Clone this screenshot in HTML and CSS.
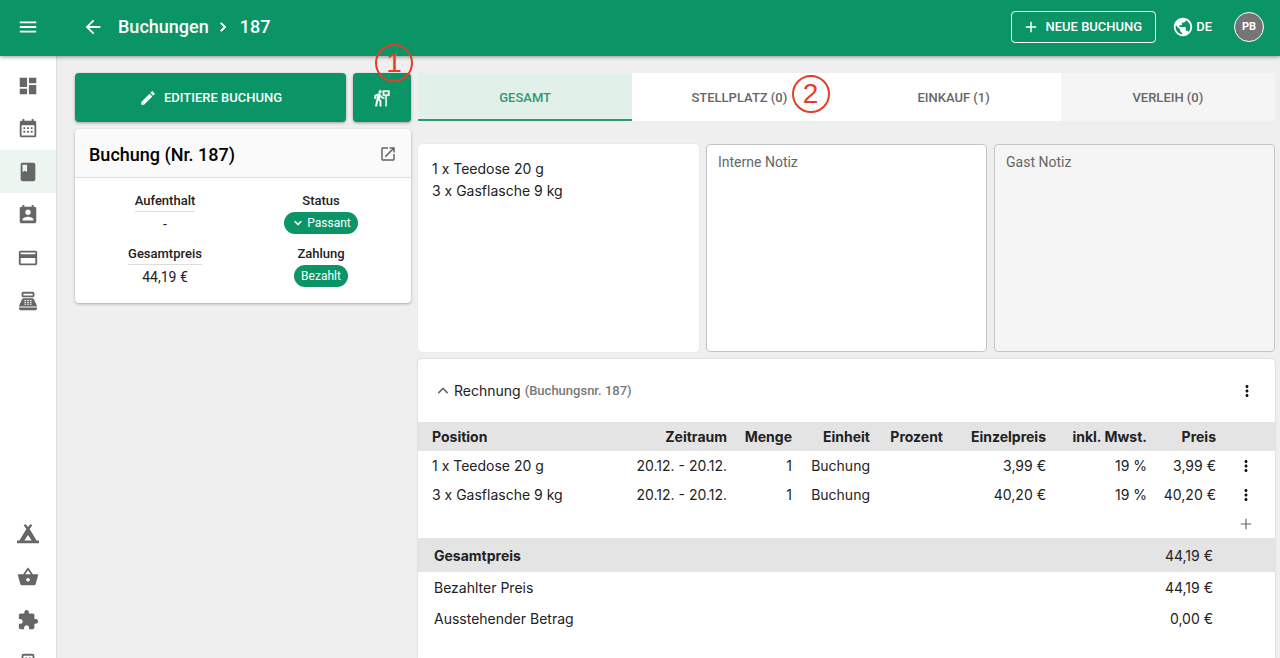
FILE: index.html
```html
<!DOCTYPE html>
<html lang="de">
  <head>
    <meta charset="UTF-8" />
    <meta name="viewport" content="width=device-width, initial-scale=1.0" />
    <title>Buchung 187</title>

    <link rel="stylesheet" href="styles.css">
  </head>

  <body>
    <header class="topbar">
      <button class="icon-button menu" aria-label="Menü">
        <svg class="icon" viewBox="0 0 24 24"><path d="M3 18h18v-2H3v2zm0-5h18v-2H3v2zm0-7v2h18V6H3z" /></svg>
      </button>
      <nav class="breadcrumb">
        <a href="#" aria-label="Zurück">
          <svg class="icon" viewBox="0 0 24 24"><path d="M20 11H7.83l5.59-5.59L12 4l-8 8 8 8 1.41-1.41L7.83 13H20v-2z" /></svg>
        </a>
        <a class="crumb" href="#">Buchungen</a>
        <svg class="icon small chevron" viewBox="0 0 24 24"><path d="M10 6L8.59 7.41 13.17 12l-4.58 4.59L10 18l6-6z" stroke="currentColor" /></svg>
        <span>187</span>
      </nav>
      <div class="topbar-actions">
        <button class="new-booking">
          <svg class="icon small" viewBox="0 0 24 24"><path d="M19 13h-6v6h-2v-6H5v-2h6V5h2v6h6v2z" /></svg>
          NEUE BUCHUNG
        </button>
        <button class="language">
          <svg class="icon" viewBox="0 0 24 24"><path d="M12 2C6.48 2 2 6.48 2 12s4.48 10 10 10 10-4.48 10-10S17.52 2 12 2zm-1 17.93c-3.95-.49-7-3.85-7-7.93 0-.62.08-1.21.21-1.79L9 15v1c0 1.1.9 2 2 2v1.93zm6.9-2.54c-.26-.81-1-1.39-1.9-1.39h-1v-3c0-.55-.45-1-1-1H8v-2h2c.55 0 1-.45 1-1V7h2c1.1 0 2-.9 2-2v-.41c2.93 1.19 5 4.06 5 7.41 0 2.08-.8 3.97-2.1 5.39z" /></svg>
          DE
        </button>
        <button class="avatar">PB</button>
      </div>
    </header>

    <div class="layout">
      <nav class="sidebar">
        <div class="sidebar-group">
          <a href="#" aria-label="Dashboard">
            <svg class="icon" viewBox="0 0 24 24"><path d="M3 13h8V3H3v10zm0 8h8v-6H3v6zm10 0h8V11h-8v10zm0-18v6h8V3h-8z" /></svg>
          </a>
          <a href="#" aria-label="Kalender">
            <svg class="icon" viewBox="0 0 24 24"><path d="M9 10v2H7v-2h2m4 0v2h-2v-2h2m4 0v2h-2v-2h2m2-7a2 2 0 0 1 2 2v14a2 2 0 0 1-2 2H5c-1.11 0-2-.9-2-2V5a2 2 0 0 1 2-2h1V1h2v2h8V1h2v2h1m0 16V8H5v11h14M9 14v2H7v-2h2m4 0v2h-2v-2h2m4 0v2h-2v-2h2z" /></svg>
          </a>
          <a class="active" href="#" aria-label="Buchungen">
            <svg class="icon" viewBox="0 0 24 24"><path d="M18 2H6c-1.1 0-2 .9-2 2v16c0 1.1.9 2 2 2h12c1.1 0 2-.9 2-2V4c0-1.1-.9-2-2-2zM6 4h5v8l-2.5-1.5L6 12V4z" /></svg>
          </a>
          <a href="#" aria-label="Gäste">
            <svg class="icon" viewBox="0 0 24 24"><path d="M19 3h-1V1h-2v2H8V1H6v2H5c-1.11 0-2 .9-2 2v14c0 1.1.89 2 2 2h14c1.1 0 2-.9 2-2V5c0-1.1-.9-2-2-2zm-7 3c1.66 0 3 1.34 3 3s-1.34 3-3 3-3-1.34-3-3 1.34-3 3-3zm6 12H6v-1c0-2 4-3.1 6-3.1s6 1.1 6 3.1v1z" /></svg>
          </a>
          <a href="#" aria-label="Zahlungen">
            <svg class="icon" viewBox="0 0 24 24"><path d="M20 4H4c-1.11 0-1.99.89-1.99 2L2 18c0 1.11.89 2 2 2h16c1.11 0 2-.89 2-2V6c0-1.11-.89-2-2-2zm0 14H4v-6h16v6zm0-10H4V6h16v2z" /></svg>
          </a>
          <a href="#" aria-label="Kasse">
            <svg class="icon" viewBox="0 0 24 24">
              <path d="M17 2H7c-1.1 0-2 .9-2 2v2c0 1.1.9 2 2 2h10c1.1 0 2-.9 2-2V4c0-1.1-.9-2-2-2zm0 4H7V4h10v2zm3 16H4c-1.1 0-2-.9-2-2v-1h20v1c0 1.1-.9 2-2 2zM18.53 10.19A2 2 0 0 0 16.7 9H7.3c-.79 0-1.51.47-1.83 1.19L2 18h20l-3.47-7.81z" />
              <path class="keys" d="M8 11.5h2M11 11.5h2M14 11.5h2M8 13.5h2M11 13.5h2M14 13.5h2M8 15.5h2M11 15.5h2M14 15.5h2" />
            </svg>
          </a>
        </div>
        <div class="sidebar-group">
          <a href="#" aria-label="Stellplätze">
            <svg class="icon" viewBox="0 0 24 24"><path d="M9.2 1L12 4.4 14.8 1l1.9 1.5-2.9 4L21.4 19H24v3H0v-3h2.6l7.6-12.5-2.9-4zM12 13l-4 6h8z" /></svg>
          </a>
          <a href="#" aria-label="Einkauf">
            <svg class="icon" viewBox="0 0 24 24"><path d="M17.21 9l-4.38-6.56c-.19-.28-.51-.42-.83-.42-.32 0-.64.14-.83.43L6.79 9H2c-.55 0-1 .45-1 1 0 .09.01.18.04.27l2.54 9.27c.23.84 1 1.46 1.92 1.46h13c.92 0 1.69-.62 1.93-1.46l2.54-9.27L23 10c0-.55-.45-1-1-1h-4.79zM9 9l3-4.4L15 9H9zm3 8c-1.1 0-2-.9-2-2s.9-2 2-2 2 .9 2 2-.9 2-2 2z" /></svg>
          </a>
          <a href="#" aria-label="Erweiterungen">
            <svg class="icon" viewBox="0 0 24 24"><path d="M20.5 11H19V7c0-1.1-.9-2-2-2h-4V3.5C13 2.12 11.88 1 10.5 1S8 2.12 8 3.5V5H4c-1.1 0-1.99.9-1.99 2v3.8H3.5c1.49 0 2.7 1.21 2.7 2.7s-1.21 2.7-2.7 2.7H2V20c0 1.1.9 2 2 2h3.8v-1.5c0-1.49 1.21-2.7 2.7-2.7 1.49 0 2.7 1.21 2.7 2.7V22H17c1.1 0 2-.9 2-2v-4h1.5c1.38 0 2.5-1.12 2.5-2.5S21.88 11 20.5 11z" /></svg>
          </a>
          <a href="#" aria-label="Verwaltung">
            <svg class="icon" viewBox="0 0 24 24"><path d="M7 2h10a2 2 0 0 1 2 2v18H5V4a2 2 0 0 1 2-2zm0 2v16h10V4zm2 2h2v3H9zm4 0h2v3h-2z" /></svg>
          </a>
        </div>
      </nav>

      <main class="content">
        <section class="booking">
          <div class="booking-actions">
            <button class="primary edit">
              <svg class="icon small" viewBox="0 0 24 24"><path d="M3 17.25V21h3.75L17.81 9.94l-3.75-3.75L3 17.25zM20.71 7.04c.39-.39.39-1.02 0-1.41l-2.34-2.34c-.39-.39-1.02-.39-1.41 0l-1.83 1.83 3.75 3.75 1.83-1.83z" /></svg>
              EDITIERE BUCHUNG
            </button>
            <button class="primary checkout" aria-label="Abreise">
              <svg class="icon small" viewBox="0 0 24 24"><path d="M9.5 5.5c1.1 0 2-.9 2-2s-.9-2-2-2-2 .9-2 2 .9 2 2 2zM5.75 8.9L3 23h2.1l1.75-8L9 17v6h2v-7.55L8.95 13.4l.6-3C10.85 12 12.8 13 15 13v-2c-1.85 0-3.45-1-4.35-2.45l-.95-1.6C9.35 6.35 8.7 6 8 6c-.25 0-.5.05-.75.15L2 8.3V13h2V9.65l1.75-.75M13 2v7h3.75v14h1.5V9H22V2h-9zm7 5.2h-5V3.8h5v3.4z" stroke="currentColor" stroke-width=".5" /></svg>
              <span class="marker marker-checkout">1</span>
            </button>
          </div>

          <div class="card">
            <div class="card-header">
              <h1>Buchung (Nr. 187)</h1>
              <a href="#" aria-label="Öffnen">
                <svg class="icon small" viewBox="0 0 24 24"><path d="M19 19H5V5h7V3H5c-1.11 0-2 .9-2 2v14c0 1.1.89 2 2 2h14c1.1 0 2-.9 2-2v-7h-2v7zM14 3v2h3.59l-9.83 9.83 1.41 1.41L19 6.41V10h2V3h-7z" /></svg>
              </a>
            </div>
            <dl class="facts">
              <div>
                <dt><span class="underlined">Aufenthalt</span></dt>
                <dd>-</dd>
              </div>
              <div>
                <dt>Status</dt>
                <dd>
                  <button class="chip">
                    <svg class="icon tiny" viewBox="0 0 24 24"><path d="M16.59 8.59L12 13.17 7.41 8.59 6 10l6 6 6-6z" stroke="currentColor" /></svg>
                    Passant
                  </button>
                </dd>
              </div>
              <div>
                <dt><span class="underlined">Gesamtpreis</span></dt>
                <dd>44,19 €</dd>
              </div>
              <div>
                <dt>Zahlung</dt>
                <dd><span class="chip">Bezahlt</span></dd>
              </div>
            </dl>
          </div>
        </section>

        <section class="details">
          <div class="tabs" role="tablist">
            <button class="tab selected" role="tab">GESAMT</button>
            <button class="tab" role="tab">STELLPLATZ (0)<span class="marker marker-pitch">2</span></button>
            <button class="tab" role="tab">EINKAUF (1)</button>
            <button class="tab muted" role="tab">VERLEIH (0)</button>
          </div>

          <div class="notes">
            <div class="summary">
              <div>1 x Teedose 20 g</div>
              <div>3 x Gasflasche 9 kg</div>
            </div>
            <textarea aria-label="Interne Notiz" placeholder="Interne Notiz"></textarea>
            <textarea aria-label="Gast Notiz" placeholder="Gast Notiz" disabled></textarea>
          </div>

          <div class="invoice">
            <div class="invoice-header">
              <button class="icon-button" aria-label="Einklappen">
                <svg class="icon small" viewBox="0 0 24 24"><path d="M12 7l-7 7 1.5 1.5L12 10l5.5 5.5L19 14z" /></svg>
              </button>
              <h2>Rechnung</h2>
              <span class="invoice-number">(Buchungsnr. 187)</span>
              <button class="icon-button more" aria-label="Mehr">
                <svg class="icon small" viewBox="0 0 24 24"><path d="M12 8c1.1 0 2-.9 2-2s-.9-2-2-2-2 .9-2 2 .9 2 2 2zm0 2c-1.1 0-2 .9-2 2s.9 2 2 2 2-.9 2-2-.9-2-2-2zm0 6c-1.1 0-2 .9-2 2s.9 2 2 2 2-.9 2-2-.9-2-2-2z" /></svg>
              </button>
            </div>

            <table class="positions">
              <colgroup>
                <col>
                <col class="col-period">
                <col class="col-amount">
                <col class="col-unit">
                <col class="col-percent">
                <col class="col-single">
                <col class="col-tax">
                <col class="col-price">
                <col class="col-action">
              </colgroup>
              <thead>
                <tr>
                  <th>Position</th>
                  <th>Zeitraum</th>
                  <th>Menge</th>
                  <th>Einheit</th>
                  <th>Prozent</th>
                  <th>Einzelpreis</th>
                  <th>inkl. Mwst.</th>
                  <th>Preis</th>
                  <th></th>
                </tr>
              </thead>
              <tbody>
                <tr>
                  <td>1 x Teedose 20 g</td>
                  <td>20.12. - 20.12.</td>
                  <td>1</td>
                  <td>Buchung</td>
                  <td></td>
                  <td>3,99 €</td>
                  <td>19 %</td>
                  <td>3,99 €</td>
                  <td>
                    <button class="icon-button dark" aria-label="Mehr">
                      <svg class="icon small" viewBox="0 0 24 24"><path d="M12 8c1.1 0 2-.9 2-2s-.9-2-2-2-2 .9-2 2 .9 2 2 2zm0 2c-1.1 0-2 .9-2 2s.9 2 2 2 2-.9 2-2-.9-2-2-2zm0 6c-1.1 0-2 .9-2 2s.9 2 2 2 2-.9 2-2-.9-2-2-2z" /></svg>
                    </button>
                  </td>
                </tr>
                <tr>
                  <td>3 x Gasflasche 9 kg</td>
                  <td>20.12. - 20.12.</td>
                  <td>1</td>
                  <td>Buchung</td>
                  <td></td>
                  <td>40,20 €</td>
                  <td>19 %</td>
                  <td>40,20 €</td>
                  <td>
                    <button class="icon-button dark" aria-label="Mehr">
                      <svg class="icon small" viewBox="0 0 24 24"><path d="M12 8c1.1 0 2-.9 2-2s-.9-2-2-2-2 .9-2 2 .9 2 2 2zm0 2c-1.1 0-2 .9-2 2s.9 2 2 2 2-.9 2-2-.9-2-2-2zm0 6c-1.1 0-2 .9-2 2s.9 2 2 2 2-.9 2-2-.9-2-2-2z" /></svg>
                    </button>
                  </td>
                </tr>
                <tr>
                  <td colspan="8"></td>
                  <td>
                    <button class="icon-button" aria-label="Position hinzufügen">
                      <svg class="icon small" viewBox="0 0 24 24"><path d="M19 12.8h-6.2V19h-1.6v-6.200H5v-1.600h6.200V5h1.600v6.200H19z" /></svg>
                    </button>
                  </td>
                </tr>
              </tbody>
            </table>

            <table class="totals">
              <tbody>
                <tr class="sum">
                  <th>Gesamtpreis</th>
                  <td>44,19 €</td>
                </tr>
                <tr>
                  <th>Bezahlter Preis</th>
                  <td>44,19 €</td>
                </tr>
                <tr>
                  <th>Ausstehender Betrag</th>
                  <td>0,00 €</td>
                </tr>
              </tbody>
            </table>
          </div>
        </section>
      </main>
    </div>
  </body>
</html>
```
FILE: styles.css
```css
* {
  box-sizing: border-box;
}

body {
  margin: 0;
  height: 100vh;
  display: flex;
  flex-direction: column;
  overflow: hidden;
  background-color: #efefef;
  color: #222;
  font-family: Roboto, "Liberation Sans", sans-serif;
  font-size: 14px;
}

button {
  padding: 0;
  border: none;
  background: none;
  color: inherit;
  font: inherit;
  cursor: pointer;
}

a {
  color: inherit;
  text-decoration: none;
}

.icon {
  display: block;
  flex: none;
  width: 22px;
  height: 22px;
  fill: currentColor;
}

.icon.small {
  width: 18px;
  height: 18px;
}

.icon.tiny {
  width: 14px;
  height: 14px;
}

.icon-button {
  display: flex;
  align-items: center;
  justify-content: center;
  color: #666;
}

/* top bar */

.topbar {
  position: relative;
  z-index: 2;
  flex: none;
  height: 56px;
  padding: 0 16px 3px 0;
  display: flex;
  align-items: center;
  background-color: #0b9567;
  box-shadow: 0 1px 4px rgba(0, 0, 0, 0.4);
  color: #fff;
}

.menu {
  width: 56px;
  color: #fff;
}

.breadcrumb {
  margin-left: 26px;
  display: flex;
  align-items: center;
  font-size: 18px;
  font-weight: 500;
}

.crumb {
  margin-left: 14px;
}

.chevron {
  margin: 0 8px 0 5px;
}

.topbar-actions {
  margin-left: auto;
  display: flex;
  align-items: center;
  font-size: 13px;
  font-weight: 500;
}

.new-booking {
  height: 32px;
  padding: 0 13px 0 10px;
  display: flex;
  align-items: center;
  gap: 6px;
  border: 1px solid #fff;
  border-radius: 4px;
}

.language {
  margin: 0 22px 0 16px;
  display: flex;
  align-items: center;
  gap: 2px;
}

.avatar {
  width: 30px;
  height: 30px;
  border: 1px solid #fff;
  border-radius: 50%;
  background-color: #757575;
  font-size: 11px;
  font-weight: 700;
}

/* sidebar */

.layout {
  flex: 1;
  min-height: 0;
  display: flex;
}

.sidebar {
  flex: none;
  width: 57px;
  padding-top: 8px;
  display: flex;
  flex-direction: column;
  gap: 190px;
  background-color: #fff;
  border-right: 1px solid #ddd;
  color: #666;
  overflow: hidden;
}

.sidebar-group {
  flex: none;
}

.sidebar a {
  height: 43px;
  display: flex;
  align-items: center;
  justify-content: center;
}

.sidebar a.active {
  background-color: #edf5f1;
}

.keys {
  fill: none;
  stroke: #fff;
}

/* content */

.content {
  flex: 1;
  min-width: 0;
  padding: 17px 5px 0 18px;
  display: grid;
  grid-template-columns: 336px 1fr;
  gap: 7px;
}

.booking {
  display: flex;
  flex-direction: column;
  gap: 7px;
}

.booking-actions {
  display: flex;
  gap: 7px;
}

.primary {
  height: 49px;
  display: flex;
  align-items: center;
  justify-content: center;
  gap: 7px;
  border-radius: 4px;
  background-color: #0b9567;
  box-shadow: 0 1px 3px rgba(0, 0, 0, 0.35);
  color: #fff;
  font-size: 13px;
  font-weight: 500;
}

.edit {
  flex: 1;
}

.checkout {
  position: relative;
  width: 58px;
}

.card {
  border-radius: 4px;
  background-color: #fff;
  box-shadow: 0 1px 3px rgba(0, 0, 0, 0.3);
}

.card-header {
  height: 49px;
  padding: 2px 14px 0;
  display: flex;
  align-items: center;
  justify-content: space-between;
  border-bottom: 1px solid #ddd;
  border-radius: 4px 4px 0 0;
  background-color: #fafafa;
  color: #666;
}

.card-header h1 {
  margin: 0;
  color: #000;
  font-size: 18px;
  font-weight: 500;
}

.facts {
  margin: 0;
  padding: 13px 12px 14px;
  display: grid;
  grid-template-columns: 1fr 1fr;
  row-gap: 8px;
  text-align: center;
}

.facts dt {
  font-size: 13px;
  font-weight: 500;
  line-height: 20px;
}

.underlined {
  display: inline-block;
  border-bottom: 1px solid #ddd;
}

.facts dd {
  height: 24px;
  margin: 0;
  display: flex;
  align-items: center;
  justify-content: center;
}

.chip {
  height: 22px;
  padding: 0 7px;
  display: inline-flex;
  align-items: center;
  gap: 2px;
  border-radius: 11px;
  background-color: #0b9567;
  color: #fff;
  font-size: 12px;
}

/* details */

.details {
  min-width: 0;
  display: flex;
  flex-direction: column;
}

.tabs {
  display: flex;
}

.tab {
  position: relative;
  flex: 1;
  height: 48px;
  background-color: #fff;
  color: #666;
  font-size: 13px;
  font-weight: 500;
}

.tab.selected {
  background-color: #e1f1ea;
  box-shadow: inset 0 -2px #2f9871;
  color: #2f9871;
}

.tab.muted {
  background-color: #f5f5f5;
}

.marker {
  position: absolute;
  z-index: 3;
  width: 38px;
  height: 38px;
  border: 2px solid #e0402a;
  border-radius: 50%;
  color: #e0402a;
  font-family: "Liberation Sans", Arial, sans-serif;
  font-size: 28px;
  font-weight: 400;
  line-height: 34px;
  text-align: center;
}

.marker-checkout {
  top: -29px;
  right: -2px;
}

.marker-pitch {
  top: 2px;
  right: 17px;
}

.notes {
  margin: 23px 0 7px;
  display: grid;
  grid-template-columns: 1fr 1fr 1fr;
  gap: 7px;
}

.summary {
  padding: 14px;
  border-radius: 4px;
  background-color: #fff;
  box-shadow: 0 0 1px rgba(0, 0, 0, 0.2);
  font-family: Inter, "Liberation Sans", sans-serif;
  line-height: 22px;
}

.notes textarea {
  display: block;
  width: 100%;
  height: 208px;
  padding: 7px 11px;
  border: 1px solid #c4c4c4;
  border-radius: 4px;
  background-color: #fff;
  font-family: inherit;
  font-size: 14px;
  line-height: 20px;
  resize: none;
}

.notes textarea:disabled {
  background-color: #f5f5f5;
}

.notes textarea::placeholder {
  color: #666;
}

/* invoice */

.invoice {
  flex: 1;
  border-radius: 4px 4px 0 0;
  background-color: #fff;
  box-shadow: 0 0 2px rgba(0, 0, 0, 0.2);
  font-family: Inter, "Liberation Sans", sans-serif;
}

.invoice-header {
  height: 63px;
  padding: 0 19px 0 16px;
  display: flex;
  align-items: center;
}

.invoice-header h2 {
  margin: 0 4px 0 2px;
  font-size: 14px;
  font-weight: 400;
}

.invoice-number {
  color: #777;
  font-family: Roboto, "Liberation Sans", sans-serif;
  font-size: 13px;
  font-weight: 500;
}

.more {
  margin-left: auto;
  color: #111;
}

table {
  width: 100%;
  border-collapse: collapse;
}

.positions {
  table-layout: fixed;
}

.positions th,
.positions td {
  height: 29px;
  padding: 0 8px;
  text-align: right;
  white-space: nowrap;
}

.positions th:first-child,
.positions td:first-child {
  padding-left: 14px;
  text-align: left;
}

.positions thead,
.sum {
  background-color: #e4e4e4;
}

.positions th {
  font-weight: 700;
}

.positions td:last-child {
  padding: 0 20px 0 13px;
}

.dark {
  color: #111;
}

.col-period {
  width: 120px;
}

.col-amount {
  width: 65px;
}

.col-unit {
  width: 78px;
}

.col-percent {
  width: 73px;
}

.col-single {
  width: 103px;
}

.col-tax {
  width: 101px;
}

.col-price {
  width: 69px;
}

.col-action {
  width: 51px;
}

.totals th,
.totals td {
  height: 31px;
  padding: 0 62px 0 16px;
  font-weight: 400;
  text-align: right;
}

.totals th {
  text-align: left;
}

.totals .sum th {
  height: 34px;
  font-weight: 700;
}
```
